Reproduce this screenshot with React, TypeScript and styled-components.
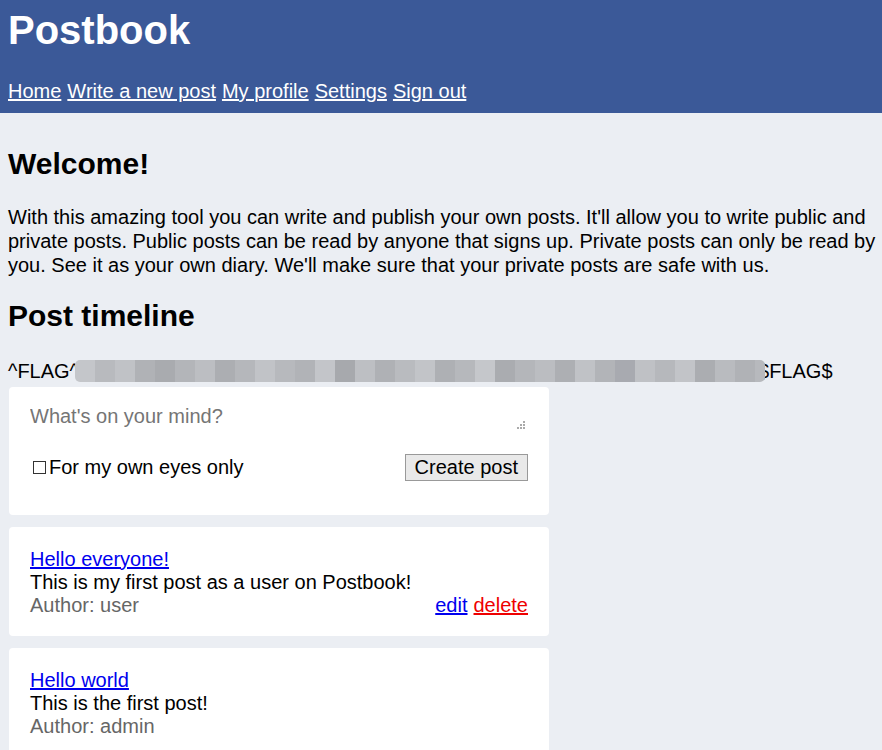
import React, { useState } from 'react';
import styled, { createGlobalStyle } from 'styled-components';

const GlobalStyle = createGlobalStyle`
  html, body {
    margin: 0;
    padding: 0;
    background: #ebeef3;
  }
  body {
    font-family: "Liberation Sans", Arial, sans-serif;
    color: #000;
  }
`;

const Header = styled.header`
  background: #3b5998;
  padding: 8px 8px 10px;
  color: #fff;
`;

const Title = styled.h1`
  margin: 0 0 27px;
  font-size: 40px;
  font-weight: bold;
`;

const Nav = styled.nav`
  display: flex;
  gap: 6px;
  font-size: 20px;
`;

const NavLink = styled.a`
  color: #fff;
  text-decoration: underline;
`;

const Main = styled.main`
  padding: 34px 8px 40px;
`;

const Heading = styled.h2<{ $top?: number }>`
  margin: ${(p) => p.$top ?? 0}px 0 0;
  font-size: 30px;
  font-weight: bold;
`;

const Intro = styled.p`
  margin: 24px -8px 0 0;
  font-size: 20px;
  line-height: 24px;
`;

const FlagLine = styled.div`
  margin: 26px 0 0;
  font-size: 20px;
  line-height: 24px;
  display: flex;
  align-items: center;
  white-space: nowrap;
`;

const Redacted = styled.span`
  display: inline-flex;
  height: 22px;
  margin: 0 -7px 0 -4px;
  filter: blur(0.6px);
  border-radius: 5px;
  overflow: hidden;
`;

const Pixel = styled.span<{ $shade: string; $w: number }>`
  display: block;
  width: ${(p) => p.$w}px;
  height: 100%;
  background: ${(p) => p.$shade};
`;

const Card = styled.div`
  width: 540px;
  margin-left: 1px;
  background: #fff;
  border-radius: 4px;
  box-sizing: border-box;
  padding: 21px 21px 19px;
  margin-top: 12px;
  font-size: 20px;
`;

const Composer = styled(Card)`
  margin-top: 4px;
  padding: 17px 21px 34px;
`;

const AreaWrap = styled.div`
  position: relative;
`;

const TextArea = styled.textarea`
  display: block;
  width: 100%;
  height: 27px;
  box-sizing: border-box;
  border: none;
  outline: none;
  padding: 1px 0;
  font-family: inherit;
  font-size: 20px;
  line-height: 23px;
  color: #000;
  resize: none;
  &::placeholder {
    color: #757575;
  }
`;

const Grip = styled.svg`
  position: absolute;
  right: 3px;
  bottom: 2px;
  width: 8px;
  height: 8px;
  pointer-events: none;
`;

const ComposerRow = styled.div`
  margin-top: 23px;
  display: flex;
  align-items: center;
  justify-content: space-between;
`;

const CheckLabel = styled.label`
  display: flex;
  align-items: center;
  font-size: 20px;
`;

const Check = styled.input`
  appearance: none;
  width: 13px;
  height: 13px;
  margin: 0 3px 0 3px;
  border: 1px solid #333;
  background: #fff;
  box-sizing: border-box;
`;

const Button = styled.button`
  height: 27px;
  padding: 0 9px;
  font-family: inherit;
  font-size: 20px;
  background: #e9e9e9;
  border: 1px solid #999;
  color: #000;
`;

const PostTitle = styled.a`
  color: #0000ee;
  text-decoration: underline;
`;

const PostBody = styled.div``;

const PostFooter = styled.div`
  display: flex;
  justify-content: space-between;
`;

const Author = styled.span`
  color: #666;
`;

const Actions = styled.span`
  display: flex;
  gap: 6px;
`;

const ActionLink = styled.a<{ $danger?: boolean }>`
  color: ${(p) => (p.$danger ? '#e00' : '#0000ee')};
  text-decoration: underline;
`;

const shades = [
  '#c4c6ca', '#b8babe', '#c0c2c6', '#b0b2b6', '#a9abaf', '#b3b5b9', '#bcbec2', '#acaeb2',
  '#b5b7bb', '#c1c3c7', '#b7b9bd', '#b1b3b7', '#c3c5c9', '#a7a9ad', '#bdbfc3', '#afb1b5',
  '#b9bbbf', '#c2c4c8', '#aeb0b4', '#b6b8bc', '#c5c7cb', '#aaacb0', '#b4b6ba', '#bbbdc1',
  '#adafb3', '#c0c2c6', '#b2b4b8', '#a8aab0', '#bfc1c5', '#b6b8bc', '#c2c4c8', '#abadb1',
  '#b9bbbf', '#b0b2b6', '#b7b9bd',
];

type Post = { title: string; body: string; author: string; mine?: boolean };

const posts: Post[] = [
  { title: 'Hello everyone!', body: 'This is my first post as a user on Postbook!', author: 'user', mine: true },
  { title: 'Hello world', body: 'This is the first post!', author: 'admin' },
];

const App = () => {
  const [text, setText] = useState('');
  const [priv, setPriv] = useState(false);

  return (
    <>
      <GlobalStyle />
      <Header>
        <Title>Postbook</Title>
        <Nav>
          <NavLink href="#">Home</NavLink>
          <NavLink href="#">Write a new post</NavLink>
          <NavLink href="#">My profile</NavLink>
          <NavLink href="#">Settings</NavLink>
          <NavLink href="#">Sign out</NavLink>
        </Nav>
      </Header>
      <Main>
        <Heading>Welcome!</Heading>
        <Intro>
          With this amazing tool you can write and publish your own posts. It'll allow you to write public and
          private posts. Public posts can be read by anyone that signs up. Private posts can only be read by
          you. See it as your own diary. We'll make sure that your private posts are safe with us.
        </Intro>
        <Heading $top={22}>Post timeline</Heading>
        <FlagLine>
          ^FLAG^
          <Redacted>
            {shades.map((s, i) => (
              <Pixel key={i} $shade={s} $w={i === shades.length - 1 ? 10 : 20} />
            ))}
          </Redacted>
          $FLAG$
        </FlagLine>
        <Composer>
          <AreaWrap>
            <TextArea
              placeholder="What's on your mind?"
              value={text}
              onChange={(e) => setText(e.target.value)}
            />
            <Grip viewBox="0 0 8 8">
              <rect x="6" y="0" width="2" height="2" fill="#aaa" />
              <rect x="3" y="3" width="2" height="2" fill="#aaa" />
              <rect x="6" y="3" width="2" height="2" fill="#aaa" />
              <rect x="0" y="6" width="2" height="2" fill="#aaa" />
              <rect x="3" y="6" width="2" height="2" fill="#aaa" />
              <rect x="6" y="6" width="2" height="2" fill="#aaa" />
            </Grip>
          </AreaWrap>
          <ComposerRow>
            <CheckLabel>
              <Check type="checkbox" checked={priv} onChange={() => setPriv(!priv)} />
              For my own eyes only
            </CheckLabel>
            <Button>Create post</Button>
          </ComposerRow>
        </Composer>
        {posts.map((p) => (
          <Card key={p.title}>
            <PostTitle href="#">{p.title}</PostTitle>
            <PostBody>{p.body}</PostBody>
            <PostFooter>
              <Author>Author: {p.author}</Author>
              {p.mine && (
                <Actions>
                  <ActionLink href="#">edit</ActionLink>
                  <ActionLink href="#" $danger>delete</ActionLink>
                </Actions>
              )}
            </PostFooter>
          </Card>
        ))}
      </Main>
    </>
  );
};

export default App;
